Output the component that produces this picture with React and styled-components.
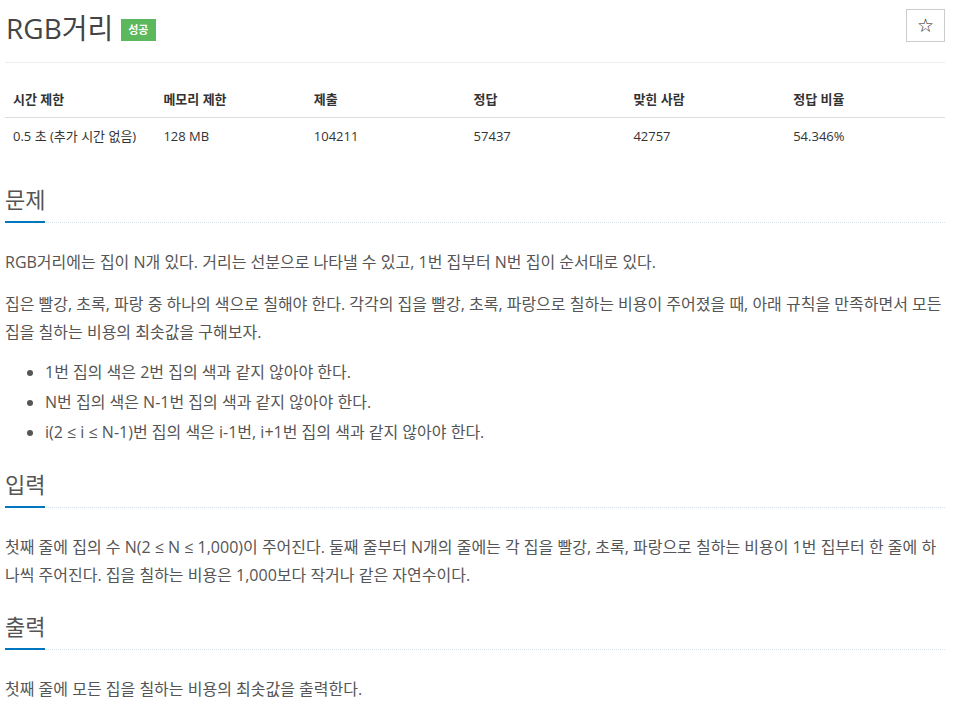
import { createGlobalStyle } from 'styled-components';
import styled from 'styled-components';

const GlobalStyle = createGlobalStyle`
  body {
    margin: 0;
    background: #fff;
    font-family: "Open Sans", "Noto Sans CJK KR", sans-serif;
    color: #555;
  }
`;

const Page = styled.div`
  width: 940px;
  margin-left: 5px;
`;

const Header = styled.div`
  display: flex;
  justify-content: space-between;
  align-items: flex-start;
  padding-top: 8px;
  padding-bottom: 14px;
  border-bottom: 1px solid #eee;
`;

const Title = styled.h1`
  margin: 0;
  display: flex;
  align-items: center;
  gap: 8px;
  font-size: 28px;
  line-height: 40px;
  font-weight: 400;
  color: #444;
  padding-left: 1px;
`;

const Badge = styled.span`
  display: inline-block;
  background: ${(props) => props.bg};
  color: #fff;
  font-size: 11px;
  font-weight: 700;
  line-height: 22px;
  padding: 0 7px;
  margin-top: 4px;
`;

const StarBtn = styled.button`
  width: 39px;
  height: 33px;
  margin-top: 1px;
  border: 1px solid #ccc;
  background: #fff;
  color: #222;
  font-size: 19px;
  line-height: 1;
  padding: 0;
  cursor: pointer;
  font-family: "DejaVu Sans", sans-serif;
`;

const Table = styled.table`
  width: 100%;
  border-collapse: collapse;
  margin-top: 18px;
  margin-bottom: 6px;
  font-size: 13px;
  color: #333;
`;

const Th = styled.th`
  text-align: left;
  padding: 8px;
  line-height: 20px;
  font-weight: 700;
  border-bottom: 1px solid #ddd;
`;

const Td = styled.td`
  padding: 8px;
  line-height: 20px;
`;

const Section = styled.section`
  margin-top: 22px;
`;

const Headline = styled.div`
  border-bottom: 1px dotted #d6e0ec;
`;

const Heading = styled.h2`
  display: inline-block;
  margin: 0 0 -1px;
  padding-bottom: 7px;
  font-size: 22px;
  line-height: 30px;
  font-weight: 400;
  color: #555;
  border-bottom: 2px solid #0076c0;
`;

const Body = styled.div`
  padding-top: 25px;
  font-size: 16px;
  color: #555;

  p {
    margin: 0 0 14px;
    line-height: 28px;
  }
  p:last-child {
    margin-bottom: 0;
  }
`;

const List = styled.ul`
  margin: -3px 0 0;
  padding-left: 40px;

  li {
    line-height: 30px;
  }
`;

const stats = [
  { label: '시간 제한', value: '0.5 초 (추가 시간 없음)', w: '16%' },
  { label: '메모리 제한', value: '128 MB', w: '16%' },
  { label: '제출', value: '104211', w: '17%' },
  { label: '정답', value: '57437', w: '17%' },
  { label: '맞힌 사람', value: '42757', w: '17%' },
  { label: '정답 비율', value: '54.346%', w: '17%' },
];

function App() {
  return (
    <Page>
      <GlobalStyle />
      <Header>
        <Title>
          RGB거리
          <Badge bg={'#5cb85c'}>성공</Badge>
        </Title>
        <StarBtn>☆</StarBtn>
      </Header>

      <Table>
        <thead>
          <tr>
            {stats.map((s, i) => (
              <Th key={i} style={{ width: s.w }}>
                {s.label}
              </Th>
            ))}
          </tr>
        </thead>
        <tbody>
          <tr>
            {stats.map((s, i) => (
              <Td key={i}>{s.value}</Td>
            ))}
          </tr>
        </tbody>
      </Table>

      <Section style={{ marginTop: 30 }}>
        <Headline>
          <Heading>문제</Heading>
        </Headline>
        <Body>
          <p>
            RGB거리에는 집이 N개 있다. 거리는 선분으로 나타낼 수 있고, 1번
            집부터 N번 집이 순서대로 있다.
          </p>
          <p>
            집은 빨강, 초록, 파랑 중 하나의 색으로 칠해야 한다. 각각의 집을
            빨강, 초록, 파랑으로 칠하는 비용이 주어졌을 때, 아래 규칙을
            만족하면서 모든 집을 칠하는 비용의 최솟값을 구해보자.
          </p>
          <List>
            <li>1번 집의 색은 2번 집의 색과 같지 않아야 한다.</li>
            <li>N번 집의 색은 N-1번 집의 색과 같지 않아야 한다.</li>
            <li>
              i(2 ≤ i ≤ N-1)번 집의 색은 i-1번, i+1번 집의 색과 같지 않아야
              한다.
            </li>
          </List>
        </Body>
      </Section>

      <Section>
        <Headline>
          <Heading>입력</Heading>
        </Headline>
        <Body>
          <p>
            첫째 줄에 집의 수 N(2 ≤ N ≤ 1,000)이 주어진다. 둘째 줄부터 N개의
            줄에는 각 집을 빨강, 초록, 파랑으로 칠하는 비용이 1번 집부터 한
            줄에 하나씩 주어진다. 집을 칠하는 비용은 1,000보다 작거나 같은
            자연수이다.
          </p>
        </Body>
      </Section>

      <Section>
        <Headline>
          <Heading>출력</Heading>
        </Headline>
        <Body>
          <p>첫째 줄에 모든 집을 칠하는 비용의 최솟값을 출력한다.</p>
        </Body>
      </Section>
    </Page>
  );
}

export default App;
